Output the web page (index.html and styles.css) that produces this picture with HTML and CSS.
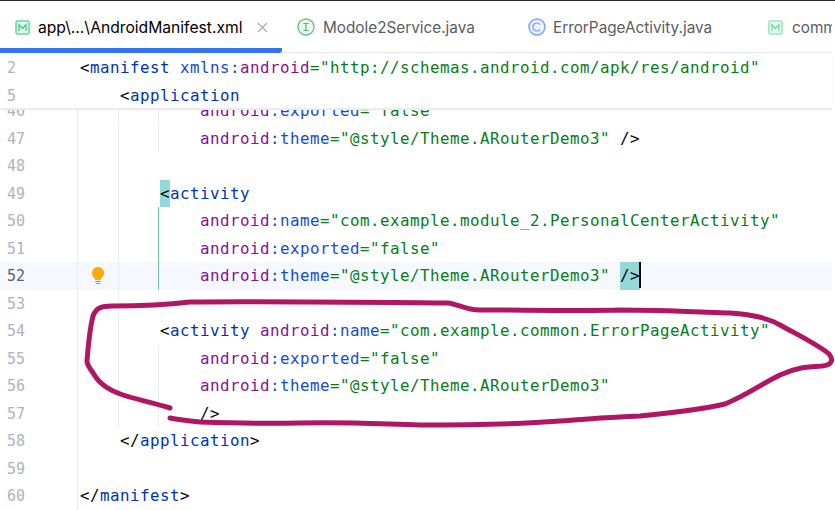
FILE: index.html
```html
<!DOCTYPE html>
<html lang="en">
<head>
<meta charset="utf-8">
<title>AndroidManifest.xml</title>
<link rel="stylesheet" href="styles.css">
</head>
<body>
<div class="window">
  <div class="tabs">
    <div class="tab active">
      <svg class="ticon" viewBox="0 0 15 15"><rect x="1" y="1" width="13" height="13" rx="1.5" fill="#e3f9ec" stroke="#63dc9e" stroke-width="1.6"/><path d="M4 11V4.500l3.500 4L11 4.500V11" fill="none" stroke="#3fc587" stroke-width="1.200"/></svg>
      <span class="tname">app\...\AndroidManifest.xml</span>
      <svg class="tclose" viewBox="0 0 11 11"><path d="M1 1l9 9M10 1l-9 9" stroke="#a9adb5" stroke-width="1.300" fill="none"/></svg>
    </div>
    <div class="tab second">
      <svg class="ticon round" viewBox="0 0 18 18"><circle cx="9" cy="9" r="8" fill="#eef9f1" stroke="#6fbf87" stroke-width="1.400"/><path d="M6.500 5.500h5M6.500 12.500h5M9 5.500v7" fill="none" stroke="#5bb377" stroke-width="1.200"/></svg>
      <span class="tname">Modole2Service.java</span>
    </div>
    <div class="tab third">
      <svg class="ticon round" viewBox="0 0 18 18"><circle cx="9" cy="9" r="8" fill="#eaf1ff" stroke="#7da4f5" stroke-width="1.500"/><path d="M12 6.500A4 4 0 1 0 12 11.500" fill="none" stroke="#6d97f0" stroke-width="1.200"/></svg>
      <span class="tname">ErrorPageActivity.java</span>
    </div>
    <div class="tab last">
      <svg class="ticon" viewBox="0 0 15 15"><rect x="1" y="1" width="13" height="13" rx="1.500" fill="#e9faf0" stroke="#98e8be" stroke-width="1.600"/><path d="M4 11V4.500l3.500 4L11 4.500V11" fill="none" stroke="#6dd49e" stroke-width="1.200"/></svg>
      <span class="tname">common</span>
    </div>
  </div>

  <div class="editor">
    <div class="sticky">
      <div class="row"><span class="num">2</span><code class="code"><i class="p">&lt;</i><b class="t">manifest</b> <b class="n">xmlns:</b><b class="a">android</b><b class="s">="http://schemas.android.com/apk/res/android"</b></code></div>
      <div class="row"><span class="num">5</span><code class="code"><i class="ind"></i><i class="p">&lt;</i><b class="t">application</b></code></div>
    </div>

    <div class="row clipped"><span class="num">46</span><code class="code"><i class="ind"></i><i class="ind g"></i><i class="ind g"></i><b class="a">android</b><b class="n">:exported</b><b class="s">="false"</b></code></div>
    <div class="row"><span class="num">47</span><code class="code"><i class="ind"></i><i class="ind g"></i><i class="ind g"></i><b class="a">android</b><b class="n">:theme</b><b class="s">="@style/Theme.ARouterDemo3"</b> <i class="p">/&gt;</i></code></div>
    <div class="row"><span class="num">48</span><code class="code"><i class="ind"></i><i class="ind g"></i></code></div>
    <div class="row"><span class="num">49</span><code class="code"><i class="ind"></i><i class="ind g"></i><i class="p match">&lt;</i><b class="t">activity</b></code></div>
    <div class="row"><span class="num">50</span><code class="code"><i class="ind"></i><i class="ind g"></i><i class="ind gt"></i><b class="a">android</b><b class="n">:name</b><b class="s">="com.example.module_2.PersonalCenterActivity"</b></code></div>
    <div class="row"><span class="num">51</span><code class="code"><i class="ind"></i><i class="ind g"></i><i class="ind gt"></i><b class="a">android</b><b class="n">:exported</b><b class="s">="false"</b></code></div>
    <div class="row current"><span class="num">52</span><code class="code"><i class="ind bulbcell"><svg class="bulb" viewBox="0 0 14 20"><path d="M7 1a6 6 0 0 0-3.800 10.700c.7.600 1 1.300 1 2.300h5.600c0-1 .3-1.700 1-2.300A6 6 0 0 0 7 1z" fill="#ffaa0d"/><path d="M4.200 15.500h5.600M4.800 17.500h4.400" stroke="#8a8d93" stroke-width="1.200"/></svg></i><i class="ind g"></i><i class="ind gt"></i><b class="a">android</b><b class="n">:theme</b><b class="s">="@style/Theme.ARouterDemo3"</b> <i class="p match">/&gt;</i><i class="caret"></i></code></div>
    <div class="row"><span class="num">53</span><code class="code"><i class="ind"></i><i class="ind g"></i></code></div>
    <div class="row"><span class="num">54</span><code class="code"><i class="ind"></i><i class="ind g"></i><i class="p">&lt;</i><b class="t">activity</b> <b class="a">android</b><b class="n">:name</b><b class="s">="com.example.common.ErrorPageActivity"</b></code></div>
    <div class="row"><span class="num">55</span><code class="code"><i class="ind"></i><i class="ind g"></i><i class="ind g"></i><b class="a">android</b><b class="n">:exported</b><b class="s">="false"</b></code></div>
    <div class="row"><span class="num">56</span><code class="code"><i class="ind"></i><i class="ind g"></i><i class="ind g"></i><b class="a">android</b><b class="n">:theme</b><b class="s">="@style/Theme.ARouterDemo3"</b></code></div>
    <div class="row"><span class="num">57</span><code class="code"><i class="ind"></i><i class="ind g"></i><i class="ind g"></i><i class="p">/&gt;</i></code></div>
    <div class="row"><span class="num">58</span><code class="code"><i class="ind"></i><i class="p">&lt;/</i><b class="t">application</b><i class="p">&gt;</i></code></div>
    <div class="row"><span class="num">59</span><code class="code"></code></div>
    <div class="row"><span class="num">60</span><code class="code"><i class="p">&lt;/</i><b class="t">manifest</b><i class="p">&gt;</i></code></div>
  </div>

  <svg class="scribble" viewBox="0 0 835 510">
    <path d="M170 408C150 402 135 399 123 395C108 390 100 384 95 376C91 369 87 366 87 361C88 348 90 328 93 316C96 308 101 306 112 306C135 306 165 305 190 302C250 301 340 302 448 303C458 304 465 310 480 310C520 310 590 311 620 310C660 310 700 312 730 313C755 315 768 318 782 326C800 336 820 346 829 354C834 360 832 365 822 366C805 367 795 368 780 375C765 382 745 396 725 404C700 410 660 414 640 416C610 417 590 419 560 421C520 424 470 425 420 425C380 424 350 422 300 423C260 424 230 423 200 422C190 421 180 420 170 418" fill="none" stroke="#b01664" stroke-width="5" stroke-linecap="round" stroke-linejoin="round"/>
  </svg>
</div>
</body>
</html>
```

FILE: styles.css
```css
* { box-sizing: border-box; }
html, body { margin: 0; padding: 0; background: #fff; }
.window {
  position: relative;
  width: 835px;
  height: 510px;
  overflow: hidden;
  border-top: 1px solid #26282c;
}
.tabs {
  display: flex;
  height: 52px;
  width: 832px;
  box-shadow: inset 0 -1px #e6e7ec;
  overflow: hidden;
  font-family: "Inter", sans-serif;
  font-size: 15.300px;
}
.tab {
  display: flex;
  align-items: center;
  height: 52px;
  color: #5a5d63;
  white-space: nowrap;
  flex: none;
}
.tab.active {
  width: 282px;
  padding: 5px 0 0 15px;
  color: #000;
  font-size: 15.650px;
  border-bottom: 5px solid #3574f0;
  border-radius: 0 3px 3px 0;
}
.tab.active .ticon { margin-right: 8px; }
.tab.second { width: 231px; padding-left: 15px; }
.tab.third { width: 240px; padding-left: 15px; }
.tab.third .ticon { margin-right: 7px; }
.tab.last { flex: 1; padding-left: 15px; overflow: hidden; }
.ticon { width: 15px; height: 15px; margin-right: 9px; flex: none; }
.ticon.round { width: 18px; height: 18px; margin-right: 8px; }
.tclose { width: 11px; height: 11px; margin-left: 15px; flex: none; }
.editor {
  width: 832px;
  font-family: "DejaVu Sans Mono", monospace;
  font-size: 15.800px;
  letter-spacing: 0.490px;
}
.sticky {
  position: relative;
  z-index: 1;
  height: 57px;
  padding-top: 1.250px;
  background: #fff;
  border-bottom: 2px solid #ebecf0;
  box-shadow: 0 1px 2px rgba(0, 0, 0, 0.04);
}
.row {
  display: flex;
  height: 27.500px;
  line-height: 27.500px;
  white-space: pre;
}
.row.clipped { height: 14.500px; overflow: hidden; }
.row.clipped > * { height: 27.500px; margin-top: -13.250px; }
.row.current { background: #f5f8fe; }
.num {
  width: 78px;
  flex: none;
  padding: 1px 0 0 7px;
  color: #aeb3c1;
  letter-spacing: 0;
  font-size: 15px;
  border-right: 1px solid #ebecf0;
}
.sticky .num { border-right-color: transparent; }
.row.current .num { color: #5a5d63; }
.code {
  display: block;
  font: inherit;
  flex: 1;
  padding-left: 2px;
}
.code i, .code b { font-style: normal; font-weight: 400; }
.ind {
  position: relative;
  display: inline-block;
  width: 40px;
  height: 27.500px;
  vertical-align: top;
}
.ind.g::before, .ind.gt::before {
  content: "";
  position: absolute;
  left: -2px;
  top: 0;
  bottom: 0;
  width: 1px;
  background: #ebecf0;
}
.ind.gt::before { background: #6dbfb8; }
.bulbcell { padding: 4px 0 0 11px; }
.bulb { display: block; width: 14px; height: 20px; }
.p { color: #080808; }
.t { color: #0033b3; }
.n { color: #174ad4; }
.a { color: #871094; }
.s { color: #067d17; }
.match {
  display: inline-block;
  height: 27.500px;
  background: #93d9d9;
}
.caret {
  display: inline-block;
  width: 2px;
  height: 26px;
  margin-left: -1px;
  vertical-align: top;
  background: #000;
}
.scribble {
  position: absolute;
  left: 0;
  top: -1px;
  width: 835px;
  height: 510px;
  pointer-events: none;
}
```
